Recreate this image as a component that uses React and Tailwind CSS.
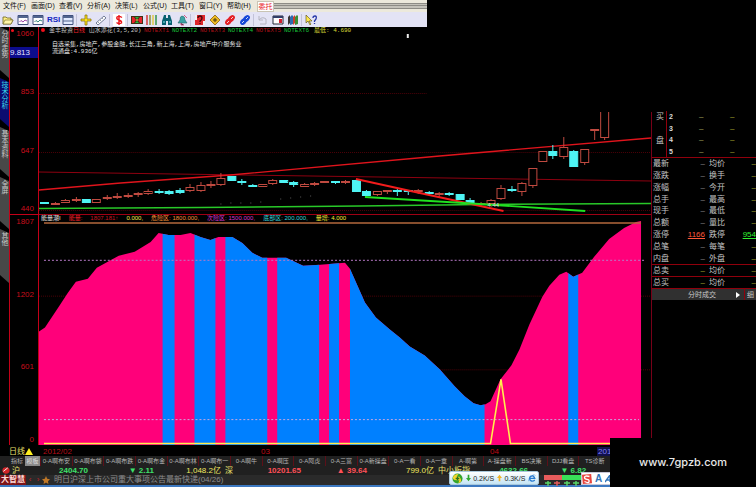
import React, { useState } from 'react'
import clsx from 'clsx'

const menus = ['文件(F)', '画面(D)', '查看(V)', '分析(A)', '决策(L)', '公式(U)', '工具(T)', '窗口(Y)', '帮助(H)']

const sideTabs = [
  { nome: '分时走势', altura: 'h-[51px]' },
  { nome: '技术分析', altura: 'h-[49px]' },
  { nome: '基本资料', altura: 'h-[50px]' },
  { nome: '全屏', altura: 'h-[52px]' },
  { nome: '其他', altura: 'h-[54px]' },
]

const formulas = [
  '0-A啊布安', '0-A啊布袋', '0-A啊布跌', '0-A啊布金', '0-A啊布林', '0-A啊布一',
  '0-A啊牛', '0-A啊压', '0-A阿虎', '0-A三富', '0-A新操盘', '0-A一看', '0-A一章',
  'A-啊第', 'A-操盘新', 'BS决策', 'DJJ看盘', 'TS诊断',
]

// [x, top, bottom, wick top, wick bottom, falling]
const candles = [
  [43, 202, 204, 202, 204, 1], [54, 203, 205, 202, 205, 0], [64, 200, 203, 199, 203, 0],
  [75, 199, 201, 197, 202, 0], [85, 199, 203, 199, 203, 1], [95, 199, 203, 199, 203, 0],
  [106, 197, 199, 195, 200, 0], [116, 196, 198, 193, 199, 0], [127, 195, 197, 193, 198, 0],
  [137, 193, 195, 192, 197, 0], [147, 191, 194, 189, 195, 0], [158, 191, 193, 189, 194, 1],
  [168, 191, 194, 190, 195, 1], [179, 190, 193, 188, 194, 1], [189, 187, 191, 184, 192, 0],
  [200, 185, 191, 182, 192, 0], [210, 184, 186, 181, 188, 0], [220, 178, 185, 173, 186, 0],
  [231, 176, 181, 176, 181, 1], [241, 181, 183, 179, 185, 1], [252, 185, 187, 184, 187, 1],
  [262, 184, 187, 184, 187, 0], [272, 180, 184, 179, 185, 0], [283, 180, 183, 180, 183, 1],
  [293, 182, 185, 181, 187, 1], [304, 184, 187, 183, 187, 0], [314, 183, 185, 182, 186, 0],
  [324, 181, 183, 181, 183, 0], [335, 181, 183, 181, 184, 1], [345, 181, 183, 180, 184, 0],
  [356, 180, 192, 179, 192, 1], [366, 191, 196, 190, 196, 1], [377, 191, 195, 191, 196, 0],
  [387, 190, 192, 190, 194, 0], [397, 190, 192, 189, 196, 1], [408, 190, 192, 190, 195, 1],
  [418, 190, 192, 189, 194, 0], [429, 192, 194, 191, 195, 1], [439, 193, 195, 192, 197, 0],
  [449, 193, 195, 192, 196, 1], [460, 194, 200, 194, 200, 1], [470, 200, 203, 198, 204, 1],
  [481, 203, 205, 202, 206, 0], [491, 200, 204, 199, 204, 0], [501, 188, 199, 185, 200, 0],
  [512, 189, 191, 186, 192, 1], [522, 183, 192, 182, 196, 0], [533, 168, 186, 168, 188, 0],
  [543, 151, 162, 151, 162, 0], [553, 151, 156, 145, 159, 1], [564, 147, 157, 137, 159, 0],
  [574, 151, 167, 150, 167, 1], [585, 149, 163, 149, 165, 0], [595, 129, 131, 130, 140, 0],
  [605, 108, 138, 108, 140, 0],
]

const energia =
  'M38 332 44 328 58 307 67 293 75 282 87 279 96 268 118 256 134 252 150 242 158 233 168 235 180 235 190 233 200 237 210 240 218 237 232 237 242 243 252 253 262 258 286 258 303 266 320 265 345 263 350 269 365 303 376 318 390 330 400 338 410 347 425 356 440 370 455 387 465 397 474 404 481 406 486 405 491 402 501 380 512 366 520 350 530 325 543 297 550 286 560 275 567 272 574 277 583 273 595 257 610 239 625 228 637 222 642 221V446H38Z'

const faixas = [[162, 12], [194, 21], [225, 42], [277, 42], [329, 10], [350, 135], [569, 10]]

const cotacoes = [
  ['最新', '均价'], ['涨跌', '换手'], ['涨幅', '今开'], ['总手', '最高'], ['现手', '最低'],
  ['总额', '量比'], ['涨停', '跌停', '1166', '954'], ['总笔', '每笔'], ['内盘', '外盘'],
]

const totais = [['总卖', '均价'], ['总买', '均价']]

const indices = [
  { nome: '沪', valor: '2404.70', dif: '▼ 2.11', volume: '1,048.2亿', cor: 'text-[#3fe06a]' },
  { nome: '深', valor: '10201.65', dif: '▲ 39.64', volume: '799.0亿', cor: 'text-[#ff5058]' },
  { nome: '中小板指', valor: '4632.66', dif: '▼ 6.82', volume: '', cor: 'text-[#3fe06a]' },
]

function Icon({ children }) {
  return (
    <svg viewBox="0 0 12 12" className="size-3" aria-hidden="true">
      {children}
    </svg>
  )
}

function WindowIcon({ color }) {
  return (
    <Icon>
      <path d="M1 1.500h10v9H1z" fill="#fff" stroke="#40507c" />
      <path d="M1 2h10v2H1z" fill="#52658f" />
      <path d="M2.500 8 4 6.500 6 8l2-2 2 1" fill="none" stroke={color} />
    </Icon>
  )
}

function ChainIcon({ color }) {
  return (
    <Icon>
      <ellipse cx="7.500" cy="4.500" rx="3.800" ry="2.800" transform="rotate(-45 7.500 4.500)" fill={color} />
      <ellipse cx="4.500" cy="7.500" rx="3.800" ry="2.800" transform="rotate(-45 4.500 7.500)" fill={color} />
      <path d="m7 5 2-2M3 9l2-2" stroke="#fff" strokeWidth=".8" />
    </Icon>
  )
}

function Toolbar() {
  const grupos = [
    {
      nome: 'arquivo',
      itens: [
        ['打开', <Icon><path d="M1 10V3h3l1 1h4v2h2l-2 4z" fill="#ffee85" stroke="#69621c" strokeWidth=".8" /><path d="m1 10 2-4h8l-2 4z" fill="#fff6a8" stroke="#69621c" strokeWidth=".6" /></Icon>],
        ['走势', <WindowIcon color="#9b45a8" />],
        ['K线', <WindowIcon color="#35857d" />],
        ['RSI', <span className="w-3 text-[8px] font-bold text-[#1428c0]">RSI</span>],
        ['列表', <Icon><path d="M1 1.500h10v9H1z" fill="#e2eaff" stroke="#40507c" /><path d="M1 2h10v2H1zM1 6.500h10v1H1z" fill="#52658f" /></Icon>],
      ],
    },
    {
      nome: 'desenho',
      itens: [
        ['移动', <Icon><path d="M5 1h2v4h4v2H7v4H5V7H1V5h4z" fill="#ffe516" stroke="#8d7711" strokeWidth=".8" /></Icon>],
        ['画线', <Icon><path d="m1 9 8-7 2 2-8 7z" fill="#fff" stroke="#53607c" strokeWidth=".8" /><path d="m3 8 1 1m1-3 1 1m1-3 1 1" stroke="#53607c" strokeWidth=".6" /></Icon>],
      ],
    },
    {
      nome: 'moeda',
      itens: [
        ['除权', <Icon><path d="M0 0h12v12H0z" fill="#fff" /><path d="M9 3.500Q6 1.500 4 3q-1 2 2 3t2.500 3Q6 10.500 3.500 8.500M6 1v10" fill="none" stroke="#ec161b" strokeWidth="1.400" /></Icon>],
      ],
    },
    {
      nome: 'dados',
      itens: [
        ['板块', <Icon><path d="M0 2h12v8H0z" fill="#3d3417" /><path d="M1 3h2l2 3-2 3H1zM11 3H9L7 6l2 3h2z" fill="#e7232c" /><path d="M4 3h4L6 5zM4 9h4L6 7z" fill="#25ba42" /><path d="m5 6 1-1 1 1-1 1z" fill="#ffe64d" /></Icon>],
        ['分布', <Icon><path d="M1 1v10" stroke="#d83a3a" strokeWidth="1.500" /><path d="M4 1v10" stroke="#8a9338" strokeWidth="1.500" /><path d="M7 1v10" stroke="#e1c847" strokeWidth="1.500" /><path d="M10 1v10" stroke="#36934a" strokeWidth="1.500" /></Icon>],
        ['查找', <Icon><path d="M3 1h2v3h2V1h2l2 6v4H7V7H5v4H1V7z" fill="#086070" /><path d="M2 8h2m4 0h2" stroke="#7ee7ed" /></Icon>],
        ['预警', <Icon><path d="M6 2q3 0 3 4l2 3H2l2-3q0-4 2-4" fill="#3aa4a4" stroke="#28686d" strokeWidth=".6" /><path d="M8 1 11 4M5 9v2h3" stroke="#d35b85" /></Icon>],
      ],
    },
    {
      nome: 'ajuda',
      itens: [
        ['资讯', <Icon><path d="M1 1h10v10H1z" fill="#dd262c" /><path d="M1 1h2v5H1zM9 7h2v4H9z" fill="#f6eeee" /><path d="M4 4q0-2 2-2t2 2-2 3v1M6 9v1" fill="none" stroke="#42080c" strokeWidth="1.300" /></Icon>],
        ['提示', <Icon><path d="m6 1 5 5-5 5-5-5z" fill="#edba24" stroke="#8a620d" strokeWidth=".8" /><path d="M4 6h4M6 4v4" stroke="#44370f" /></Icon>],
        ['前一个', <ChainIcon color="#e42127" />],
        ['后一个', <ChainIcon color="#1748d8" />],
      ],
    },
    {
      nome: 'janela',
      itens: [
        ['撤销', <Icon><path d="M2 2v4h4M2 6q3-4 7-1v5H3" fill="none" stroke="#b4b4c1" /></Icon>],
        ['侧栏', <Icon><path d="M1 2h10v8H1z" fill="#fff" stroke="#252838" /><path d="M1 2h10v2H1z" fill="#333e68" /><path d="M7 5h3v4H7z" fill="#d42030" /></Icon>],
        ['书库', <Icon><path d="m1 3 2-2v8l-2 2z" fill="#3a3636" /><path d="m3 3 2-2 1 1v8l-3 1z" fill="#2c6baf" /><path d="m6 3 2-2v8l-2 2z" fill="#c93b2d" /><path d="m8 3 2-2 1 1v8l-3 1z" fill="#3a8e36" /></Icon>],
      ],
    },
    {
      nome: 'cursor',
      itens: [
        ['帮助', <Icon><path d="M1 1v8l2-2 2 4 1-1-2-3h3z" fill="#ffe74a" stroke="#4f4814" strokeWidth=".6" /><path d="M8 4q0-2 2-2t1 3L9.500 7v1m0 1v1" fill="none" stroke="#2536a8" strokeWidth="1.300" /></Icon>],
      ],
    },
  ]

  return (
    <div className="flex h-[15px] items-center gap-[3px] bg-[#e3e3f5] px-[2px]">
      {grupos.map(grupo => (
        <div key={grupo.nome} className="flex items-center gap-[3px] border-r border-[#c2c2d8] pr-[2px] last:border-0">
          {grupo.itens.map(([nome, icone]) => (
            <button key={nome} type="button" aria-label={nome} className="flex h-3 items-center">
              {icone}
            </button>
          ))}
        </div>
      ))}
    </div>
  )
}

function Header() {
  return (
    <header className="w-[427px]">
      <div className="flex h-3 items-center bg-[#ece9dc] pl-[3px]">
        {menus.map(menu => (
          <button key={menu} type="button" className="w-7 shrink-0 text-left text-[7px] leading-3 whitespace-nowrap text-[#111]">
            {menu}
          </button>
        ))}
        <button type="button" className="ml-[2px] h-[11px] w-[17px] shrink-0 border border-[#c9c4b4] bg-white text-center text-[7px] leading-[9px] text-[#e8202a]">
          委托
        </button>
        <div className="flex h-[6px] flex-1 flex-col justify-between border-y border-[#8d8c86] bg-[#c4c2ba] py-[1px]">
          <div className="h-px bg-[#8d8c86]" />
        </div>
      </div>
      <Toolbar />
    </header>
  )
}

function PriceAxis() {
  return (
    <div className="flex w-[29px] shrink-0 flex-col border-l border-[#c40018] text-right text-[8px] leading-[10px] text-[#c80e1c]">
      <div className="relative flex h-[187px] flex-col justify-between pt-[2px] pr-1">
        {['1060', '853', '647', '440'].map(v => <span key={v}>{v}</span>)}
        <span className="absolute top-5 left-0 h-[11px] w-7 bg-[#0c0c8c] text-left text-[8px] leading-[11px] text-[#e6e6ff]">9.813</span>
        <span className="absolute top-[2px] left-[1px] size-[3px] rounded-full bg-[#f0101c]" />
      </div>
      <div className="flex flex-1 flex-col justify-between border-t border-[#c40018] pt-[2px] pr-1">
        {['1807', '1202', '601', '0'].map(v => <span key={v}>{v}</span>)}
      </div>
    </div>
  )
}

function CandleChart() {
  return (
    <section className="relative h-[187px] overflow-hidden">
      <svg viewBox="38 27 614 187" preserveAspectRatio="none" className="absolute inset-0 size-full" aria-hidden="true">
        <g stroke="#4c0008" strokeDasharray="1 1">
          <path d="M38 93.500H427M38 152.500H652M38 210.500H652" />
        </g>
        <path d="M220 204h1m9-1h1m9 0h1m9 0h1m9-1h1m19-3h1m9-1h1m9-1h1m9-1h1" stroke="#5c5c5c" />
        <path d="M38 172 652 181" stroke="#8e0010" />
        <path d="M38 190 120 183 230 175 440 156 652 138" fill="none" stroke="#e0141c" strokeWidth="1.300" />
        <path d="M38 208.500 200 207.500 360 206 480 204.500 652 203.500" fill="none" stroke="#28c828" strokeWidth="1.500" />
        {candles.map(([x, top, bottom, wickTop, wickBottom, falling]) => (
          <g key={x} stroke={falling ? '#4ef4f4' : '#c04a40'} fill={falling ? '#4ef4f4' : '#000'}>
            <path d={`M${x}.500 ${wickTop}V${wickBottom}`} />
            <rect x={x - 3.5} y={top + 0.5} width="8" height={bottom - top - 1} />
          </g>
        ))}
        <path d="M356 179 420 193 504 211" fill="none" stroke="#f41c1c" strokeWidth="1.800" />
        <path d="M365 197 480 204 586 211" fill="none" stroke="#20e020" strokeWidth="1.800" />
        <path d="M427 27H652V112H427Z" fill="#000" />
        <path d="M407 34h2v4h-2z" fill="#eee" />
        <circle cx="42" cy="30" r="2" fill="#f0101c" />
        <text x="488" y="207" fontSize="6" fill="#ddd">4.44</text>
      </svg>
      <div className="relative pl-[10px] font-['Liberation_Mono','Noto_Sans_CJK_SC',monospace] text-[6px] leading-[8px] whitespace-nowrap">
        <div className="flex">
          <span className="w-[95px] text-[#c0c0c0]">
            金丰投资<span className="text-[#f02028]">日线</span> 山水添花(3,5,20)
          </span>
          {[1, 2, 3, 4, 5, 6].map(n => (
            <span key={n} className={clsx('w-7', [2, 4, 6].includes(n) ? 'text-[#18c038]' : 'text-[#b01018]')}>
              NOTEXT{n}
            </span>
          ))}
          <span className="pl-[2px] text-[#d8d838]">最低: 4.690</span>
        </div>
        <p className="mt-[6px] pl-[3px] leading-[7px] text-[#e4e4e4]">
          自选采集,房地产,参股金融,长江三角,新上海,上海,房地产中介服务业
          <br />
          流通盘:4.936亿
        </p>
      </div>
    </section>
  )
}

function EnergyChart() {
  return (
    <section className="relative flex-1 border-t border-[#a00014]">
      <svg viewBox="38 215 614 231" preserveAspectRatio="none" className="absolute inset-0 size-full" aria-hidden="true">
        <defs>
          <clipPath id="energia">
            <path d={energia} />
          </clipPath>
        </defs>
        <path d="M38 296.500H652M38 370.500H652" stroke="#4c0008" strokeDasharray="1 1" />
        <path d={energia} fill="#ff007a" />
        <g clipPath="url(#energia)" fill="#0080ff">
          {faixas.map(([x, w]) => <rect key={x} x={x} y="215" width={w} height="231" />)}
        </g>
        <path d="M43 223H642" stroke="#b4683c" strokeWidth="1.400" />
        <path d="M43 260.500H645" stroke="#b878c8" strokeDasharray="2 2" />
        <path d="M43 420.500H640" stroke="#c8a8e0" strokeDasharray="2 2" />
        <path d="M43 444.500H491L501.500 380 511 444.500H642" fill="none" stroke="#fff04c" strokeWidth="1.600" />
      </svg>
      <div className="relative flex gap-2 pl-[2px] text-[6px] leading-[7px] whitespace-nowrap">
        <span className="text-[#e0e0e0]">能量潮I</span>
        <span className="text-[#f02028]">能量:</span>
        <span className="text-[#c01820]">1807.181↑</span>
        <span className="text-[#f0e850]">0.000,</span>
        <span className="text-[#f09038]">危险区: 1800.000,</span>
        <span className="text-[#d038d0]">次险区: 1500.000,</span>
        <span className="text-[#38d0d8]">底部区: 200.000,</span>
        <span className="text-[#f0e838]">量增: 4.000</span>
      </div>
    </section>
  )
}

function QuotePanel() {
  return (
    <aside className="mt-[84px] w-[104px] shrink-0 self-start overflow-hidden text-[8px] text-[#c4c4c4]">
      <div className="flex h-[47px] border-b border-[#90000c]">
        <div className="flex w-[15px] flex-col gap-3 border-r border-[#90000c] pl-1 leading-3">
          <span>买</span>
          <span>盘</span>
        </div>
        <table className="h-full flex-1 leading-[11px]">
          <tbody>
            {[2, 3, 4, 5].map(n => (
              <tr key={n}>
                <th className="w-8 pl-[2px] text-left text-[7px] font-bold text-[#d8d8d8]">{n}</th>
                <td className="w-[31px] text-[#a8a860]">–</td>
                <td className="text-[#a8a830]">–</td>
              </tr>
            ))}
          </tbody>
        </table>
      </div>
      <table className="h-[106px] w-full table-fixed leading-[11px]">
        <tbody>
          {cotacoes.map(([a, b, va, vb]) => (
            <tr key={a}>
              <th className="w-[26px] pl-[1px] text-left font-normal">{a}</th>
              <td className={clsx('w-[27px] text-right', va ? 'text-[#ff5a3c] underline' : 'text-[#8a8a8a]')}>{va || '–'}</td>
              <th className="w-[34px] pl-1 text-left font-normal">{b}</th>
              <td className={clsx('text-right', vb ? 'text-[#30f030] underline' : 'text-[#a8a830]')}>{vb || '–'}</td>
            </tr>
          ))}
        </tbody>
      </table>
      <table className="w-full table-fixed leading-[11px]">
        <tbody>
          {totais.map(([a, b]) => (
            <tr key={a} className="border-t border-[#90000c]">
              <th className="w-[26px] pl-[1px] text-left font-normal">{a}</th>
              <td className="w-[27px] text-right text-[#a8a830]">–</td>
              <th className="w-[34px] pl-1 text-left font-normal">{b}</th>
              <td className="text-right text-[#a8a830]">–</td>
            </tr>
          ))}
        </tbody>
      </table>
      <div className="flex h-3 items-center justify-end gap-1 border-t border-[#90000c] bg-[#303030] pr-[2px] text-[7px] leading-[11px]">
        <button type="button" className="mr-4 text-[#c8c8c8]">分时成交</button>
        <svg viewBox="0 0 4 6" className="h-[6px] w-1" aria-hidden="true">
          <path d="M0 0 4 3 0 6z" fill="#fff" />
        </svg>
        <button type="button" className="border-l border-[#90000c] pl-[2px]">细</button>
      </div>
    </aside>
  )
}

function NetMeter() {
  return (
    <div className="absolute bottom-[2px] left-[449px] flex h-[14px] w-[90px] items-center justify-between rounded-xs border border-[#a8c8dc] bg-linear-to-b from-white to-[#c4e4f4] px-[2px] text-[7px] leading-[7px] text-[#222]">
      <svg viewBox="0 0 12 12" className="size-[11px]" aria-hidden="true">
        <circle cx="6" cy="6" r="5.500" fill="#35a52c" />
        <path d="M1 5q1-4 6-4L5 4h3q2 2 2 5-1 2-3 2l1-3H5Q1 8 1 5" fill="#f5d52c" />
        <path d="M6 4v4M4 6h4" stroke="#28741c" strokeWidth="1.400" />
      </svg>
      <svg viewBox="0 0 6 8" className="h-2 w-[5px]" aria-hidden="true">
        <path d="M2 0h2v4h2L3 8 0 4h2z" fill="#32a832" />
      </svg>
      <span>0.2K/S</span>
      <svg viewBox="0 0 6 8" className="h-2 w-[5px]" aria-hidden="true">
        <path d="M2 8h2V4h2L3 0 0 4h2z" fill="#f0b428" />
      </svg>
      <span>0.3K/S</span>
      <svg viewBox="0 0 10 10" className="size-2" aria-hidden="true">
        <path d="M8.500 7.500Q6 10 3 8 1 5 3 3q4-2 5.500 2.500H2.500" fill="none" stroke="#2a7cd0" strokeWidth="1.600" />
        <path d="M1 9Q0 6 5 2q4-2 4 0" fill="none" stroke="#2a7cd0" strokeWidth=".8" />
      </svg>
    </div>
  )
}

function InputMethod() {
  return (
    <div className="absolute bottom-[2px] left-[581px] flex h-[13px] w-[36px] items-center gap-[3px] border border-[#c8c8d8] bg-white text-[10px] leading-[10px] font-bold text-[#3274b8]">
      <svg viewBox="0 0 12 12" className="size-[10px]" aria-hidden="true">
        <path d="m0 1 11-1 1 11-11 1z" fill="#e8443c" />
        <path d="M9 3Q3 1.500 3 4t3 2.500T8.500 9 3 9" fill="none" stroke="#fff" strokeWidth="1.600" />
      </svg>
      <span>A</span>
      <svg viewBox="0 0 8 8" className="size-2" aria-hidden="true">
        <path d="M0 7 5 0v7M2 5h4" fill="none" stroke="#3274b8" strokeWidth="1.400" />
      </svg>
    </div>
  )
}

function StatusBar({ formula, setFormula }) {
  return (
    <footer className="relative">
      <div className="flex h-[11px] items-center pt-[2px] pl-[9px] text-[8px] leading-[9px]">
        <span className="flex w-[34px] items-center text-[#e8e070]">
          日线
          <svg viewBox="0 0 8 7" className="h-[7px] w-2" aria-hidden="true">
            <path d="m4 0 4 7H0z" fill="#fff020" />
          </svg>
        </span>
        <span className="w-[218px] text-[#b80c18]">2012/02</span>
        <span className="w-[229px] text-[#c00a14]">03</span>
        <span className="w-[107px] text-[#c00a14]">04</span>
        <span className="bg-[#10104c] pl-[1px] text-[#8080ff]">2012</span>
      </div>

      <nav className="flex h-[10px] bg-[#202020] pl-[9px] text-[6px] leading-[10px] whitespace-nowrap text-[#b4b4b4]">
        <button type="button" className="w-4">指标</button>
        <button type="button" className="w-[15px] bg-[#888] text-[#ddd]">模板</button>
        <div className="flex w-[570px]">
          {formulas.map(nome => (
            <button
              key={nome}
              type="button"
              onClick={() => setFormula(nome)}
              className={clsx('flex-1 basis-0 border-l border-[#5c1018]', formula === nome && 'bg-[#505050]')}
            >
              {nome}
            </button>
          ))}
        </div>
      </nav>

      <div className="flex h-[9px] items-center bg-[#202020] text-[8px] leading-[9px] whitespace-nowrap">
        <svg viewBox="0 0 12 10" className="h-[9px] w-3 shrink-0" aria-hidden="true">
          <ellipse cx="6" cy="5" rx="4" ry="3.500" fill="#d02428" />
          <path d="m3 6 5-4" stroke="#fff" />
        </svg>
        {indices.map(i => (
          <div key={i.nome} className="flex w-[213px] shrink-0 text-right">
            <span className={clsx('flex justify-between', i.volume ? 'w-[76px]' : 'w-[93px]')}>
              <span className="text-[#e8e070]">{i.nome}</span>
              <b className={i.cor}>{i.valor}</b>
            </span>
            <b className={clsx(i.volume ? 'w-[66px]' : 'w-[60px]', i.cor)}>{i.dif}</b>
            <span className="w-[67px] text-[#f0e860]">{i.volume}</span>
          </div>
        ))}
      </div>

      <div className="flex h-[10px] items-center bg-[#2a2a2a] text-[8px] leading-[10px] whitespace-nowrap text-[#8c8c8c]">
        <b className="w-[26px] bg-[#7c1418] text-center text-[#ffdcd8]">大智慧</b>
        <button type="button" aria-label="上一条" className="w-2 text-[#c02028]">‹</button>
        <button type="button" aria-label="下一条" className="w-2 text-[#c02028]">›</button>
        <svg viewBox="0 0 10 10" className="mr-1 size-2" aria-hidden="true">
          <path d="m5 0 1.500 3.500L10 4 7.500 6.500 8 10 5 8.200 2 10l.5-3.500L0 4l3.500-.5z" fill="#c07828" />
        </svg>
        <a href="#news">明日沪深上市公司重大事项公告最新快递(04/26)</a>
      </div>
      <div className="h-[2px] bg-[#3c78c0]" />

      <svg viewBox="0 0 68 12" className="absolute bottom-0 left-[544px] h-3 w-[68px]" aria-hidden="true">
        <path d="M0 0h18v5H0z" fill="#e85c5c" />
        <path d="M18 0h50v5H18z" fill="#38e058" />
        <path d="M1 8h6M4 6v5M20 8h6M23 6v5M29 8h6M32 6v5" stroke="#58d868" strokeWidth="1.400" />
        <path d="M10 8h6M13 6v5" stroke="#e85c5c" strokeWidth="1.400" />
      </svg>
      <NetMeter />
      <InputMethod />
    </footer>
  )
}

export default function App() {
  const [aba, setAba] = useState('技术分析')
  const [formula, setFormula] = useState('')

  return (
    <div className="relative flex min-h-screen flex-col overflow-hidden bg-black font-['Liberation_Sans','Noto_Sans_CJK_SC',sans-serif]">
      <Header />

      <main className="flex flex-1">
        {/* Abas laterais */}
        <nav className="flex w-[9px] shrink-0 flex-col">
          {sideTabs.map(tab => (
            <button
              key={tab.nome}
              type="button"
              onClick={() => setAba(tab.nome)}
              className={clsx(
                'pt-[3px] text-left text-[7px] leading-[9px] [clip-path:polygon(0_0,100%_4px,100%_100%,0_calc(100%-8px))] [writing-mode:vertical-rl]',
                tab.altura,
                aba === tab.nome ? 'bg-[#0c0c70] text-[#38d8e8]' : 'bg-[#484848] text-[#c8c8c8]'
              )}
            >
              {tab.nome}
            </button>
          ))}
        </nav>

        <PriceAxis />

        <div className="flex min-w-0 flex-1 flex-col border-l border-[#c40018]">
          <CandleChart />
          <EnergyChart />
        </div>

        {/* Linha divisória do painel de cotações */}
        <div className="mt-[85px] w-px bg-[#780018]" />
        <QuotePanel />
      </main>

      <StatusBar formula={formula} setFormula={setFormula} />

      <a
        href="#site"
        className="absolute right-0 bottom-0 flex h-[49px] w-[146px] items-center justify-center bg-black font-['Inter','Liberation_Sans',sans-serif] text-[11px] font-medium text-[#e8e8e8]"
      >
        www.7gpzb.com
      </a>
    </div>
  )
}
